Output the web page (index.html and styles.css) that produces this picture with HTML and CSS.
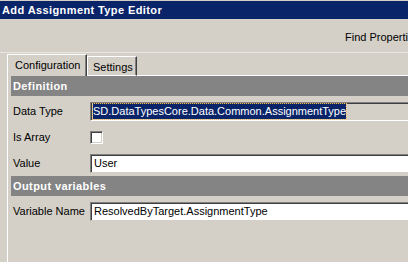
FILE: index.html
```html
<!DOCTYPE html>
<html>
<head>
<meta charset="utf-8">
<link rel="stylesheet" href="styles.css">
</head>
<body>
<div class="window">
  <div class="titlebar">Add Assignment Type Editor</div>
  <div class="toolbar"><span class="find">Find Properti</span></div>
  <div class="tabs">
    <div class="tab active">Configuration</div>
    <div class="tab">Settings</div>
    <div class="tab-fill"></div>
  </div>
  <div class="panel">
    <div class="section">Definition</div>
    <div class="row">
      <label class="lbl">Data Type</label>
      <div class="field readonly"><span class="sel">SD.DataTypesCore.Data.Common.AssignmentType</span></div>
    </div>
    <div class="row">
      <label class="lbl">Is Array</label>
      <div class="check"></div>
    </div>
    <div class="row">
      <label class="lbl">Value</label>
      <div class="field">User</div>
    </div>
    <div class="section">Output variables</div>
    <div class="row">
      <label class="lbl">Variable Name</label>
      <div class="field">ResolvedByTarget.AssignmentType</div>
    </div>
  </div>
</div>
</body>
</html>
```

FILE: styles.css
```css
html, body {
  margin: 0;
  padding: 0;
  background: #d4d0c8;
  overflow: hidden;
}
body {
  width: 408px;
  height: 262px;
  font-family: "Liberation Sans", Arial, sans-serif;
  font-size: 11px;
  color: #000;
}
.window {
  width: 408px;
  height: 262px;
  display: flex;
  flex-direction: column;
  overflow: hidden;
}
.titlebar {
  height: 18px;
  margin-top: 1px;
  background: #0a246a;
  color: #fff;
  font-weight: bold;
  font-size: 11px;
  letter-spacing: 0.4px;
  line-height: 18px;
  padding-left: 2px;
  white-space: nowrap;
}
.toolbar {
  box-sizing: border-box;
  height: 34px;
  border-bottom: 1px solid #e9e7e2;
  display: flex;
  justify-content: flex-end;
  align-items: flex-start;
  padding-top: 12px;
}
.find {
  white-space: nowrap;
  font-size: 11px;
}
.tabs {
  display: flex;
  align-items: flex-end;
  height: 22px;
  margin-top: 1px;
  padding-left: 7px;
}
.tab {
  box-sizing: border-box;
  border-top: 1px solid #fff;
  border-left: 1px solid #fff;
  border-right: 1px solid #404040;
  box-shadow: inset -1px 0 0 #808080;
  white-space: nowrap;
  flex-shrink: 0;
}
.tab.active {
  width: 80px;
  height: 22px;
  line-height: 21px;
  padding-left: 7px;
  position: relative;
  z-index: 1;
}
.tab:not(.active) {
  width: 50px;
  height: 20px;
  line-height: 21px;
  padding-left: 5px;
  border-bottom: 1px solid #fff;
}
.tab-fill {
  flex: 1;
  border-bottom: 1px solid #fff;
  align-self: stretch;
}
.panel {
  flex: 1;
  border-left: 1px solid #fff;
  margin-left: 7px;
  padding-left: 3px;
  display: flex;
  flex-direction: column;
}
.section {
  background: #848484;
  color: #fff;
  font-weight: bold;
  font-size: 11px;
  letter-spacing: 0.4px;
  height: 20px;
  line-height: 20px;
  padding-left: 2px;
  white-space: nowrap;
}
.row {
  display: flex;
  align-items: center;
  height: 26px;
  margin-top: 0;
}
.section + .row { margin-top: 2px; }
.lbl {
  flex-shrink: 0;
  box-sizing: border-box;
  width: 79px;
  padding-left: 2px;
  white-space: nowrap;
}
.field {
  flex: 1;
  min-width: 0;
  height: 19px;
  box-sizing: border-box;
  background: #fff;
  border-top: 1px solid #808080;
  border-left: 1px solid #808080;
  box-shadow: inset 1px 1px 0 #404040;
  border-bottom: 1px solid #d4d0c8;
  padding-left: 3px;
  line-height: 17px;
  white-space: nowrap;
  overflow: hidden;
}
.field.readonly {
  background: #d4d0c8;
  border-bottom: 1px solid #fff;
  padding-left: 2px;
}
.sel {
  background: #0a246a;
  color: #fff;
  outline: 1px dotted #f0c060;
  display: inline-block;
  line-height: 15px;
  margin-top: 1px;
}
.check {
  width: 13px;
  height: 13px;
  box-sizing: border-box;
  background: #fff;
  border-top: 1px solid #808080;
  border-left: 1px solid #808080;
  border-right: 1px solid #fff;
  border-bottom: 1px solid #fff;
  box-shadow: inset 1px 1px 0 #404040, inset -1px -1px 0 #d4d0c8;
}
```
